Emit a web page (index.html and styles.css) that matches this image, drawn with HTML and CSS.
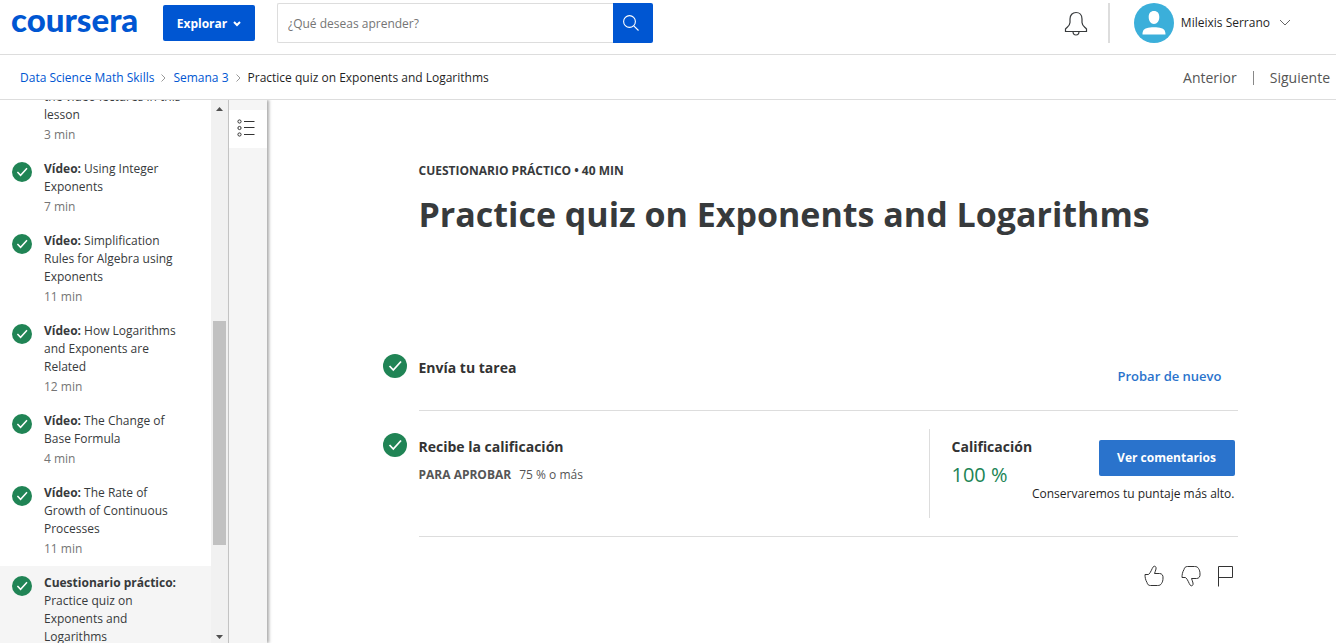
FILE: index.html
```html
<!DOCTYPE html>
<html lang="es">
<head>
<meta charset="utf-8">
<meta name="viewport" content="width=device-width, initial-scale=1">
<title>Practice quiz on Exponents and Logarithms | Coursera</title>
<link rel="stylesheet" href="styles.css">
</head>
<body>
<svg hidden width="0" height="0">
  <symbol id="check" viewBox="0 0 24 24"><circle cx="12" cy="12" r="12" fill="#208455"/><path d="M6.500 12l3.800 4 7.700-8.500" fill="none" stroke="#fff" stroke-width="1.800"/></symbol>
</svg>
<header class="header">
  <a class="logo" href="#">coursera</a>
  <button class="explore" type="button">Explorar
    <svg width="8" height="6" viewBox="0 0 8 6"><path d="M1 1l3 3 3-3" fill="none" stroke="#fff" stroke-width="2"/></svg>
  </button>
  <form class="search">
    <input class="search-input" type="text" aria-label="Buscar" placeholder="¿Qué deseas aprender?">
    <button class="search-button" type="button" aria-label="Buscar">
      <svg width="16" height="16" viewBox="0 0 16 16" fill="none" stroke="#fff" stroke-width="1.100"><circle cx="6.500" cy="6.500" r="5.900"/><path d="M10.800 10.800l4.700 4.700"/></svg>
    </button>
  </form>
  <button class="bell" type="button" aria-label="Notificaciones">
    <svg width="24" height="26" viewBox="0 0 24 26" fill="none" stroke="#373a3c" stroke-width="1.200"><path d="M1.500 21.500v-2.500c2.500-2.500 4.500-3.500 4.500-6.500V9c0-4 2.500-6.500 6-6.500S18 5 18 9v3.500c0 3 2 4 4.500 6.500v2.500zM9 21.500c0 2.500 1 3.500 3 3.500s3-1 3-3.500"/></svg>
  </button>
  <button class="account" type="button">
    <svg width="40" height="40" viewBox="0 0 40 40"><circle cx="20" cy="20" r="20" fill="#3bafda"/><path d="M20 8c3.500 0 5.300 2.300 5.300 6 0 4-2.200 7-5.300 7s-5.300-3-5.300-7c0-3.700 1.800-6 5.300-6zM8.500 31.500c0-4 1.500-5.500 4-6.200 2.200-.7 4.800-1 7.500-1s5.300.3 7.500 1c2.500.7 4 2.200 4 6.200z" fill="#fff"/></svg>
    <span>Mileixis Serrano</span>
    <svg class="caret" width="12" height="8" viewBox="0 0 12 8"><path d="M1 1l5 5 5-5" fill="none" stroke="#666" stroke-width="1"/></svg>
  </button>
</header>
<nav class="crumbs">
  <a href="#">Data Science Math Skills</a>
  <svg width="5" height="8" viewBox="0 0 5 8"><path d="M.5.5L4 4 .5 7.500" fill="none" stroke="#999"/></svg>
  <a href="#">Semana 3</a>
  <svg width="5" height="8" viewBox="0 0 5 8"><path d="M.5.5L4 4 .5 7.500" fill="none" stroke="#999"/></svg>
  <span>Practice quiz on Exponents and Logarithms</span>
  <div class="pager"><a href="#">Anterior</a><a href="#">Siguiente</a></div>
</nav>
<div class="body">
  <aside class="sidebar">
    <ul class="items">
      <li class="item first"><div>the video lectures in this lesson<small>3 min</small></div></li>
      <li class="item"><svg class="tick"><use href="#check"/></svg><div><b>Vídeo:</b> Using Integer Exponents<small>7 min</small></div></li>
      <li class="item"><svg class="tick"><use href="#check"/></svg><div><b>Vídeo:</b> Simplification Rules for Algebra using Exponents<small>11 min</small></div></li>
      <li class="item"><svg class="tick"><use href="#check"/></svg><div><b>Vídeo:</b> How Logarithms and Exponents are Related<small>12 min</small></div></li>
      <li class="item"><svg class="tick"><use href="#check"/></svg><div><b>Vídeo:</b> The Change of Base Formula<small>4 min</small></div></li>
      <li class="item"><svg class="tick"><use href="#check"/></svg><div><b>Vídeo:</b> The Rate of Growth of Continuous Processes<small>11 min</small></div></li>
      <li class="item current"><svg class="tick"><use href="#check"/></svg><div><b>Cuestionario práctico:</b> Practice quiz on Exponents and Logarithms</div></li>
    </ul>
    <div class="scrollbar">
      <svg class="arrow" viewBox="0 0 17 17"><path d="M5 11h7L8.500 7z" fill="#505050"/></svg>
      <div class="before"></div><div class="thumb"></div><div class="after"></div>
      <svg class="arrow" viewBox="0 0 17 17"><path d="M5 9h7l-3.500 4z" fill="#505050"/></svg>
    </div>
  </aside>
  <div class="rail">
    <button class="rail-button" type="button" aria-label="Contenido">
      <svg width="18" height="18" viewBox="0 0 18 18" fill="none" stroke="#333"><circle cx="2.500" cy="2.500" r="1.600"/><circle cx="2.500" cy="9" r="1.600"/><circle cx="2.500" cy="15.500" r="1.600"/><path d="M7 2.500h10.500M7 8.500h10.500M7 15.500h10.500"/></svg>
    </button>
  </div>
  <main class="main">
    <div class="content">
      <p class="kicker">CUESTIONARIO PRÁCTICO • 40 MIN</p>
      <h1>Practice quiz on Exponents and Logarithms</h1>
      <section class="step submit">
        <svg class="done"><use href="#check"/></svg>
        <div class="row"><h2>Envía tu tarea</h2><button class="retry" type="button">Probar de nuevo</button></div>
      </section>
      <section class="step">
        <svg class="done"><use href="#check"/></svg>
        <div class="row">
          <div class="criteria"><h2>Recibe la calificación</h2><p><strong>PARA APROBAR</strong><span>75 % o más</span></p></div>
          <div class="grade">
            <div class="score"><h2>Calificación</h2><p>100 %</p></div>
            <div class="feedback"><button class="primary" type="button">Ver comentarios</button><p>Conservaremos tu puntaje más alto.</p></div>
          </div>
        </div>
      </section>
      <div class="reactions">
        <button type="button" aria-label="Me gusta"><svg width="20" height="22" viewBox="0 0 20 22"><path d="M1 9.500h3.500C7 7.500 7.500 4 9.500 1.500c1.500-1 3 .5 2.500 2.500-.3 1.500-1 3-1.500 4.500h5c2.500 0 3.800 2 3.500 4.500 0 2.500-.5 4-1.500 5.500-.8 1.500-2 2-4 2H6.500c-2 0-3-1-3.500-3C1.500 15 1 12.500 1 9.500z"/></svg></button>
        <button type="button" aria-label="No me gusta"><svg width="20" height="22" viewBox="0 0 20 22"><path d="M1 12.500h3.500C7 14.500 7.500 18 9.500 20.500c1.500 1 3-.5 2.500-2.500-.3-1.500-1-3-1.500-4.500h5c2.500 0 3.800-2 3.500-4.500 0-2.500-.5-4-1.500-5.500-.8-1.500-2-2-4-2H6.500c-2 0-3 1-3.500 3C1.500 7 1 9.500 1 12.500z"/></svg></button>
        <button type="button" aria-label="Informar"><svg width="16" height="22" viewBox="0 0 16 22"><path d="M.5 21.500v-20h14v11H.5"/></svg></button>
      </div>
    </div>
  </main>
</div>
</body>
</html>
```
FILE: styles.css
```css
* { box-sizing: border-box; }
body { margin: 0; height: 100vh; overflow: hidden; display: flex; flex-direction: column; background: #fff; color: #373a3c; font: 12px/18px "Open Sans", sans-serif; }
button { padding: 0; border: 0; background: none; color: inherit; font: inherit; cursor: pointer; }
a { color: #0056d2; text-decoration: none; }
p, h1, h2, ul { margin: 0; padding: 0; }
svg { display: block; flex: none; }

.header { flex: none; display: flex; align-items: center; padding: 3px 45px 11px 11px; border-bottom: 1px solid #ddd; }
.logo { width: 152px; padding-bottom: 8px; font: 900 33px/32px Lato, sans-serif; }
.explore { display: flex; align-items: center; justify-content: center; gap: 6px; width: 92px; height: 36px; padding-top: 1px; border-radius: 2px; background: #0056d2; color: #fff; font-weight: 700; }
.search { display: flex; width: 376px; margin-left: 22px; }
.search-input { flex: 1; min-width: 0; height: 40px; padding: 0 10px; border: 1px solid #ddd; border-right: 0; border-radius: 2px 0 0 2px; font: 12px/18px "Open Sans", sans-serif; }
.search-input::placeholder { color: #757575; opacity: 1; }
.search-button { display: grid; place-items: center; width: 40px; padding-right: 4px; background: #0056d2; border-radius: 0 2px 2px 0; }
.bell { margin-left: auto; padding-right: 20px; }
.account { display: flex; align-items: center; gap: 7px; padding-left: 24px; border-left: 2px solid #ddd; color: #1f1f1f; }
.caret { margin-left: 2px; }

.crumbs { flex: none; display: flex; align-items: center; gap: 7px; height: 45px; padding: 2px 6px 0 20px; border-bottom: 1px solid #ddd; color: #1f1f1f; }
.pager { display: flex; align-items: center; margin-left: auto; font-size: 14px; }
.pager a { color: #555; }
.pager a + a { margin-left: 16px; padding-left: 16px; border-left: 1px solid #888; line-height: 14px; }

.body { flex: 1; min-height: 0; display: flex; overflow: hidden; }
.sidebar { display: flex; width: 229px; overflow: hidden; border-right: 1px solid #c4c4c4; flex: none; }
.items { flex: 1; margin-top: -12px; list-style: none; }
.item { display: flex; align-items: flex-start; gap: 12px; padding: 8px 28px 8px 12px; }
.item.first { padding-top: 0; padding-left: 44px; }
.item.current { background: #f5f5f5; padding-bottom: 40px; }
.item small { display: block; margin-top: 2px; font-size: 12px; color: #757575; }
.tick { width: 20px; height: 20px; margin-top: 2px; }
.scrollbar { display: flex; flex-direction: column; width: 17px; padding: 0 2px; background: #f1f1f1; }
.arrow { width: 17px; height: 17px; margin: 0 -2px; }
.before { flex: 204; }
.thumb { flex: 224; background: #c1c1c1; }
.after { flex: 81; }
.rail { flex: none; width: 38px; padding-top: 10px; background: #f5f5f5; box-shadow: 2px 0 3px #aaa; }
.rail-button { display: grid; place-items: center; width: 100%; height: 38px; padding: 0 4px 3px 0; background: #fff; }

.main { flex: 1; min-width: 0; }
.content { max-width: 872px; margin: 0 auto; padding: 62px 0 0 53px; }
.kicker { font-weight: 700; }
h1 { margin-top: 10px; font-size: 34px; line-height: 48px; }
.step { display: flex; gap: 12px; margin-left: -36px; }
.submit { margin-top: 100px; }
.step .row { flex: 1; display: flex; justify-content: space-between; padding: 18px 0; border-bottom: 1px solid #ddd; }
.submit .row { min-height: 72px; }
.done { width: 24px; height: 24px; margin-top: 22px; }
.submit .done { margin-top: 16px; }
h2 { font-size: 14px; line-height: 24px; color: #333; }
.retry { height: 36px; padding: 4px 16px 0; color: #2a73cc; font-weight: 600; font-size: 13px; }
.criteria { padding-top: 6px; }
.criteria p { display: flex; gap: 8px; margin-top: 7px; color: #555; }
.grade { display: flex; justify-content: space-between; width: 309px; height: 89px; border-left: 1px solid #ddd; padding: 6px 3px 0 22px; }
.score { width: 80px; }
.score p { margin-top: 4px; color: #208455; font-size: 20px; line-height: 24px; }
.feedback { display: flex; flex-direction: column; align-items: flex-end; padding-top: 5px; width: 0; white-space: nowrap; color: #1f1f1f; }
.feedback p { margin-top: 9px; }
.primary { flex: none; width: 136px; height: 36px; border-radius: 2px; background: #2a73cc; color: #fff; font-weight: 700; }
.reactions { display: flex; justify-content: flex-end; gap: 17px; padding: 28px 4px 0 0; }
.reactions path { fill: none; stroke: #333; stroke-width: 1; }
```
